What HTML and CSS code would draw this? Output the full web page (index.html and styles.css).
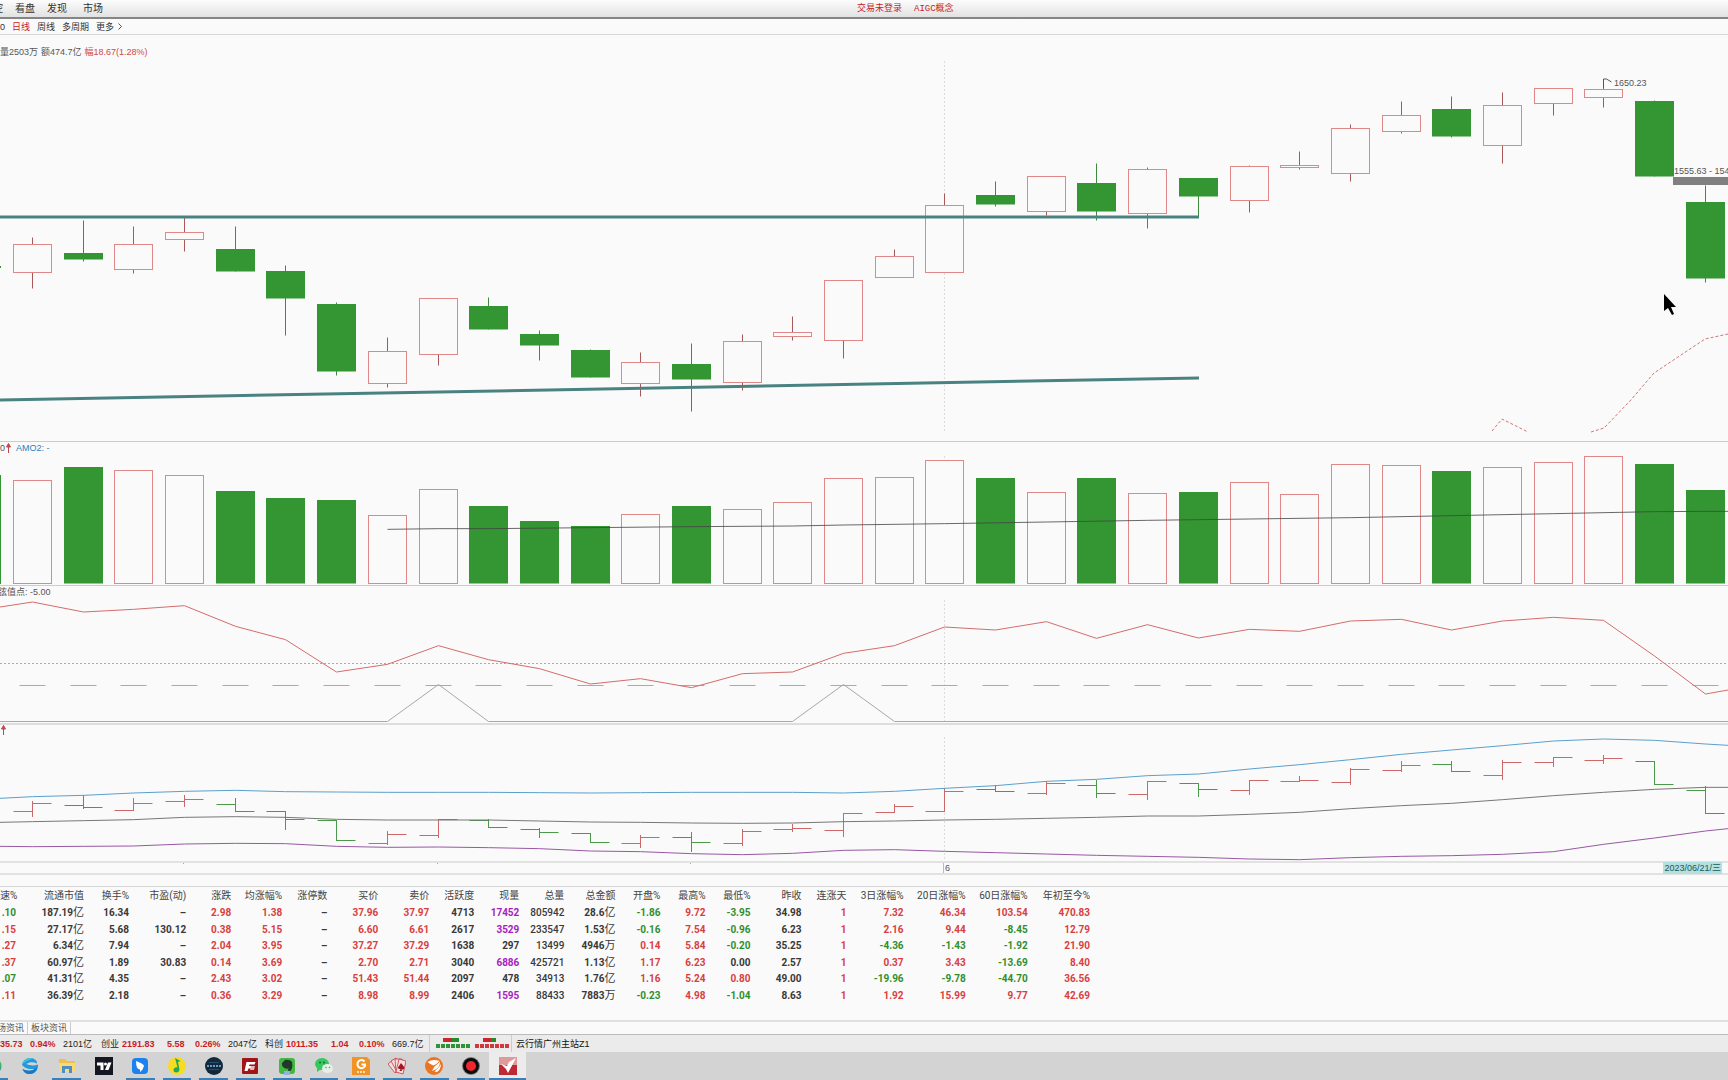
FILE: index.html
```html
<!DOCTYPE html>
<html lang="zh-CN">
<head>
<meta charset="utf-8">
<title>板块行情</title>
<link rel="stylesheet" href="styles.css">
</head>
<body>
<header class="menubar">
  <nav class="menu">
    <a href="#">控</a><a href="#">看盘</a><a href="#">发现</a><a href="#" class="market">市场</a>
  </nav>
  <div class="session"><a href="#">交易未登录</a><a href="#">AIGC概念</a></div>
</header>
<nav class="periods">
  <button type="button">0</button><button type="button" class="current">日线</button><button type="button">周线</button><button type="button">多周期</button><button type="button">更多<svg class="chevron" width="4" height="7" viewBox="0 0 4 7"><path d="M.5.5 3.5 3.5.5 6.5" fill="none" stroke="#555"/></svg></button>
</nav>
<main class="charts">
  <section class="panel price">
    <p class="caption summary"><span>量2503万</span><span>额474.7亿</span><span class="red">幅18.67(1.28%)</span></p>
    <svg class="plot" id="price"></svg>
  </section>
  <section class="panel volume">
    <p class="caption amo"><span>0</span><svg class="arrow" width="5" height="10" viewBox="0 0 5 10"><path d="M2.5 1V10M.5 4 2.5.5 4.500 4Z" stroke="#c04848" fill="#c04848"/></svg><span class="blue">AMO2: -</span></p>
    <svg class="plot" id="volume"></svg>
  </section>
  <section class="panel osc">
    <p class="caption sine"><span>弦值点: -5.00</span></p>
    <svg class="plot" id="osc"></svg>
  </section>
  <section class="panel boll">
    <p class="caption up"><svg class="arrow" width="5" height="10" viewBox="0 0 5 10"><path d="M2.5 1V10M.5 4 2.5.5 4.500 4Z" stroke="#c04848" fill="#c04848"/></svg></p>
    <svg class="plot" id="boll"></svg>
  </section>
  <div class="axis"><svg class="plot" id="axis"></svg><time class="date">2023/06/21/三</time></div>
</main>
<section class="quotes">
  <table>
    <colgroup><col class="c16"><col class="c68"><col class="c45"><col class="c57"><col class="c45"><col class="c51"><col class="c45"><col class="c51"><col class="c51"><col class="c45"><col class="c45"><col class="c45"><col class="c51"><col class="c45"><col class="c45"><col class="c45"><col class="c51"><col class="c45"><col class="c57"><col class="c62"><col class="c62"><col class="c62"></colgroup>
    <thead><tr><th>速%</th><th>流通市值</th><th>换手%</th><th>市盈(动)</th><th>涨跌</th><th>均涨幅%</th><th>涨停数</th><th>买价</th><th>卖价</th><th>活跃度</th><th>现量</th><th>总量</th><th>总金额</th><th>开盘%</th><th>最高%</th><th>最低%</th><th>昨收</th><th>连涨天</th><th>3日涨幅%</th><th>20日涨幅%</th><th>60日涨幅%</th><th>年初至今%</th></tr></thead>
    <tbody>
      <tr><td class="g">.10</td><td>187.19<i>亿</i></td><td>16.34</td><td>–</td><td class="r">2.98</td><td class="r">1.38</td><td>–</td><td class="r">37.96</td><td class="r">37.97</td><td>4713</td><td class="p">17452</td><td class="n">805942</td><td>28.6<i>亿</i></td><td class="g">-1.86</td><td class="r">9.72</td><td class="g">-3.95</td><td>34.98</td><td class="r">1</td><td class="r">7.32</td><td class="r">46.34</td><td class="r">103.54</td><td class="r">470.83</td></tr>
      <tr><td class="r">.15</td><td>27.17<i>亿</i></td><td>5.68</td><td>130.12</td><td class="r">0.38</td><td class="r">5.15</td><td>–</td><td class="r">6.60</td><td class="r">6.61</td><td>2617</td><td class="p">3529</td><td class="n">233547</td><td>1.53<i>亿</i></td><td class="g">-0.16</td><td class="r">7.54</td><td class="g">-0.96</td><td>6.23</td><td class="r">1</td><td class="r">2.16</td><td class="r">9.44</td><td class="g">-8.45</td><td class="r">12.79</td></tr>
      <tr><td class="r">.27</td><td>6.34<i>亿</i></td><td>7.94</td><td>–</td><td class="r">2.04</td><td class="r">3.95</td><td>–</td><td class="r">37.27</td><td class="r">37.29</td><td>1638</td><td>297</td><td class="n">13499</td><td>4946<i>万</i></td><td class="r">0.14</td><td class="r">5.84</td><td class="g">-0.20</td><td>35.25</td><td class="r">1</td><td class="g">-4.36</td><td class="g">-1.43</td><td class="g">-1.92</td><td class="r">21.90</td></tr>
      <tr><td class="r">.37</td><td>60.97<i>亿</i></td><td>1.89</td><td>30.83</td><td class="r">0.14</td><td class="r">3.69</td><td>–</td><td class="r">2.70</td><td class="r">2.71</td><td>3040</td><td class="p">6886</td><td class="n">425721</td><td>1.13<i>亿</i></td><td class="r">1.17</td><td class="r">6.23</td><td>0.00</td><td>2.57</td><td class="r">1</td><td class="r">0.37</td><td class="r">3.43</td><td class="g">-13.69</td><td class="r">8.40</td></tr>
      <tr><td class="g">.07</td><td>41.31<i>亿</i></td><td>4.35</td><td>–</td><td class="r">2.43</td><td class="r">3.02</td><td>–</td><td class="r">51.43</td><td class="r">51.44</td><td>2097</td><td>478</td><td class="n">34913</td><td>1.76<i>亿</i></td><td class="r">1.16</td><td class="r">5.24</td><td class="r">0.80</td><td>49.00</td><td class="r">1</td><td class="g">-19.96</td><td class="g">-9.78</td><td class="g">-44.70</td><td class="r">36.56</td></tr>
      <tr><td class="r">.11</td><td>36.39<i>亿</i></td><td>2.18</td><td>–</td><td class="r">0.36</td><td class="r">3.29</td><td>–</td><td class="r">8.98</td><td class="r">8.99</td><td>2406</td><td class="p">1595</td><td class="n">88433</td><td>7883<i>万</i></td><td class="g">-0.23</td><td class="r">4.98</td><td class="g">-1.04</td><td>8.63</td><td class="r">1</td><td class="r">1.92</td><td class="r">15.99</td><td class="r">9.77</td><td class="r">42.69</td></tr>
    </tbody>
  </table>
</section>
<nav class="tabs"><a href="#">场资讯</a><a href="#">板块资讯</a></nav>
<div class="status">
  <div class="index first"><b>35.73</b><b>0.94%</b><span>2101亿</span></div>
  <div class="index"><span>创业</span><b>2191.83</b><b>5.58</b><b>0.26%</b><span>2047亿</span></div>
  <div class="index"><span>科创</span><b>1011.35</b><b>1.04</b><b>0.10%</b><span>669.7亿</span></div>
  <div class="heat">
    <svg width="35" height="11" viewBox="0 0 35 11"><path d="M7 0h9v4H7z" fill="#c8282c"/><path d="M16 0h7v4h-7z" fill="#258a2c"/><path d="M0 8h34" stroke="#2f9438" stroke-width="4" stroke-dasharray="4 1"/></svg>
    <svg width="35" height="11" viewBox="0 0 35 11"><path d="M8 0h8v4H8z" fill="#c8282c"/><path d="M16 0h5v4h-5z" fill="#258a2c"/><path d="M0 8h34" stroke="#d03a3e" stroke-width="4" stroke-dasharray="4 1"/></svg>
  </div>
  <span class="server">云行情广州主站Z1</span>
</div>
<footer class="taskbar">
  <div class="apps">
  <button type="button" class="app open" aria-label="浏览器"><svg viewBox="0 0 18 18"><circle cx="9" cy="9" r="8.500" fill="#3cb85c"/><path d="M9 17a8 8 0 0 0 8-7H9z" fill="#2b8fd0"/></svg></button>
  <button type="button" class="app" aria-label="Edge"><svg viewBox="0 0 18 18"><path d="M1 8C2 2 8 0 12 1.500 15 2.500 16.500 5 16 6.500 12 4.500 8 5 5.500 7 8 8.500 13 9 17 7.500 17.500 13 13.500 17 9 17 5 17 2.500 15 1.500 12 6 14.500 11 14 13.500 12 9 12.500 4 11.500 1 8Z" fill="#2498d8"/><path d="M1 8C2 2 8 0 12 1.500 9 2.500 4 4 1 8Z" fill="#3fc0e4"/><path d="M1.500 12C6 14.500 11 14 13.500 12L16.500 10.500C15 15 12 17 9 17 5 17 2.500 15 1.500 12Z" fill="#1c78c4"/></svg></button>
  <button type="button" class="app open" aria-label="文件资源管理器"><svg viewBox="0 0 18 18"><path d="M1 2h6l2 2h8v11H1z" fill="#f0c04c"/><path d="M1 6h16v9H1z" fill="#f8d878"/><path d="M4 9h10v7h-3v-4H7v4H4z" fill="#4b8fc6"/></svg></button>
  <button type="button" class="app" aria-label="TradingView"><svg viewBox="0 0 18 18"><path d="M0 0h18v18H0z" fill="#131722"/><path d="M2 5.500h6.500V13H5.500V8.500H2z" fill="#fff"/><circle cx="10.500" cy="7" r="1.500" fill="#fff"/><path d="M13 5.500h3.500L13.500 13H10z" fill="#fff"/></svg></button>
  <button type="button" class="app open" aria-label="钉钉"><svg viewBox="0 0 18 18"><rect x="1" y="1" width="16" height="16" rx="4" fill="#1b82ee"/><path d="M5 4C9 5.500 12.500 7 13 9 13 10 11.500 11 12 12L9 15 9 12.500Q6.500 12 6 10.500 5 8 5 4Z" fill="#fff"/></svg></button>
  <button type="button" class="app open" aria-label="QQ音乐"><svg viewBox="0 0 18 18"><circle cx="9" cy="9" r="9" fill="#f8dc22"/><path d="M7 1 12.500 4 10 5 11.500 12.500C11.500 16 6 16.500 5.500 13.500 5 11 8 9.500 9.500 10.500Z" fill="#20a85a"/></svg></button>
  <button type="button" class="app open" aria-label="行情终端"><svg viewBox="0 0 18 18"><circle cx="9" cy="9" r="9" fill="#12283c"/><path d="M2 9h14" stroke="#78c8e8" stroke-width="1.500" stroke-dasharray="2 1"/><path d="M4 5.500h10M4 12.500h10" stroke="#28506e" stroke-width="1"/></svg></button>
  <button type="button" class="app open" aria-label="财经"><svg viewBox="0 0 18 18"><rect x="1" y="1" width="16" height="16" rx="1" fill="#a31418"/><path d="M5.500 5h9l-1 2.500H8.500L8 9h5l-1 2.500H7.500L6.500 14h-3z" fill="#fff"/><path d="M10 9h4l-1 4h-4z" fill="#e6b8b8"/></svg></button>
  <button type="button" class="app open" aria-label="印象笔记"><svg viewBox="0 0 18 18"><rect x="1" y="1" width="16" height="16" rx="3" fill="#42b840"/><path d="M4 6 7 3C10 2.500 13 3.500 14 5 15 9 14 13 12 14 9.500 14.500 9.500 12 11 11.500 8 12 5 11.500 4 8Z" fill="#22382a"/><path d="M6 14h6v4H6z" fill="#8fb4e0"/></svg></button>
  <button type="button" class="app open" aria-label="微信"><svg viewBox="0 0 18 18"><ellipse cx="7" cy="7" rx="7" ry="6" fill="#35c85c"/><path d="M2 11v4l4-3z" fill="#35c85c"/><circle cx="5" cy="5.500" r="1" fill="#1b6b32"/><circle cx="9" cy="5.500" r="1" fill="#1b6b32"/><ellipse cx="12.500" cy="11.500" rx="5.500" ry="4.500" fill="#e6f0e8"/><circle cx="11" cy="10.500" r=".8" fill="#789080"/><circle cx="14.500" cy="10.500" r=".8" fill="#789080"/></svg></button>
  <button type="button" class="app open" aria-label="广发证券"><svg viewBox="0 0 18 18"><path d="M0 0h15l3 3v15H0z" fill="#f19425"/><path d="M12.500 4.500A4 4 0 1 0 13 9V7.500H9.500" fill="none" stroke="#fff" stroke-width="2"/><path d="M5 15h8" stroke="#fbe0b8" stroke-width="2" stroke-dasharray="2 1"/></svg></button>
  <button type="button" class="app open" aria-label="纸牌"><svg viewBox="0 0 18 18"><g fill="#f7dede" stroke="#c83840" stroke-width=".8"><path d="M0 7 5 3 12 12 7 16Z"/><path d="M3 4 8 1 14 11 9 15Z"/><path d="M7 2h7v13H8Z"/><path d="M11 2l7 2-3 13-7-2z"/></g><path d="M13 6Q17 10 16 12 14.500 13 13.500 12L14 14H11.500L12.500 12Q10 12.500 10 10.500Z" fill="#a01828"/></svg></button>
  <button type="button" class="app open" aria-label="东方财富"><svg viewBox="0 0 18 18"><circle cx="9" cy="9" r="9" fill="#e97522"/><path d="M2.500 5Q8 1.500 14.500 4Q12 7 8.500 8.500 5 7 2.500 5ZM7 14 9.500 9.500Q13 7 15 4.500 15 9 11.500 12ZM9.500 14.500Q14 11 16 7 16 12 12 15Z" fill="#fff"/></svg></button>
  <button type="button" class="app open" aria-label="录屏"><svg viewBox="0 0 18 18"><circle cx="9" cy="9" r="9" fill="#777"/><circle cx="9" cy="9" r="8" fill="#0b0b0b"/><circle cx="9" cy="9" r="5" fill="#f0262c"/></svg></button>
  <button type="button" class="app open active" aria-label="通达信"><svg viewBox="0 0 18 18"><path d="M0 0h18v18H0z" fill="#e09a9c"/><path d="M0 8h18v10H0z" fill="#bc2a34"/><path d="M2 7 8 9 10 5 17 1 9 16 7 12Z" fill="#fff"/></svg></button>
  </div>
</footer>
<script src="charts.js"></script>
</body>
</html>
```
FILE: styles.css
```css
* { box-sizing: border-box; }
body {
  margin: 0;
  min-height: 100vh;
  display: flex;
  flex-direction: column;
  overflow-x: hidden;
  background: #fafafa;
  color: #333;
  font-family: "Liberation Sans", "Noto Sans CJK SC", sans-serif;
  font-size: 9px;
  line-height: 12px;
}
a { color: inherit; text-decoration: none; white-space: nowrap; }
button { border: 0; padding: 0; background: none; font: inherit; color: inherit; white-space: nowrap; }
p { margin: 0; }
.red { color: #cc4a4a; }
.blue { color: #2a80b8; }

.menubar {
  display: flex;
  align-items: center;
  height: 19px;
  font-size: 10px;
  background: linear-gradient(#fcfcfc, #e2e2e2);
  border-bottom: 2px solid #858585;
}
.menu { flex: 0 0 50%; display: flex; gap: 12px; margin-left: -7px; }
.market { margin-left: 4px; }
.session { display: flex; gap: 12px; color: #c81e1e; font-family: "Liberation Mono", "Noto Sans CJK SC", monospace; font-size: 9px; }

.periods {
  display: flex;
  align-items: center;
  gap: 7px;
  height: 16px;
  border-bottom: 1px solid #d8d8d8;
}
.periods .current { color: #cc1818; }
.chevron { margin-left: 4px; }

.panel { position: relative; border-bottom: 1px solid #ccc; }
.plot { display: block; width: 100%; height: 100%; }
.price { height: 407px; }
.volume { height: 144px; }
.osc { height: 139px; border-bottom: 2px solid #ddd; }
.boll { height: 138px; border-bottom: 2px solid #e2e2e2; }
.caption { position: absolute; top: 0; left: 0; display: flex; align-items: center; gap: 3px; color: #555; white-space: nowrap; }
.summary { top: 11px; }
.amo { gap: 1px; }
.amo .blue { margin-left: 4px; }
.sine { margin-left: -2px; }
.up { margin-left: 1px; }
.axis { position: relative; height: 12px; border-bottom: 2px solid #e2e2e2; }
.date { position: absolute; top: -1px; right: 6px; padding: 0 1px; background: #b4e0e0; color: #175a60; }
.plot text { fill: #555; font-size: 9px; }

.quotes { flex: 1; margin-top: 11px; border-top: 1px solid #d8d8d8; overflow: hidden; }
table {
  table-layout: fixed;
  width: 1090px;
  height: 117px;
  border-collapse: collapse;
  font-family: Roboto, "Noto Sans CJK SC", sans-serif;
  font-size: 10px;
}
.c16 { width: 16px; }
.c45 { width: 45px; }
.c51 { width: 51px; }
.c57 { width: 57px; }
.c62 { width: 62px; }
.c68 { width: 68px; }
th, td { padding: 0; text-align: right; white-space: nowrap; line-height: 16px; }
th { height: 18px; font-weight: 400; color: #444; }
td { font-weight: 700; color: #383838; }
td i { font-style: normal; font-weight: 400; font-size: 11px; }
.r { color: #d84040; }
.g { color: #2f8f2f; }
.p { color: #a81cc0; }
.n { font-weight: 500; }

.tabs { display: flex; height: 15px; border-top: 2px solid #e0e0e0; border-bottom: 1px solid #bbb; color: #555; }
.tabs a { padding: 0 3px; border-right: 1px solid #ccc; }
.tabs a:first-child { padding-left: 0; margin-left: -3px; }

.status { display: flex; align-items: center; height: 17px; background: #ebebeb; color: #222; white-space: nowrap; }
.index { display: grid; grid-template-columns: 21px 45px 28px 33px 37px; align-items: center; }
.index b { color: #cc1a1e; }
.first { grid-template-columns: 30px 33px 38px; }
.heat { display: flex; gap: 4px; padding: 3px 1px 3px 6px; border-left: 1px solid #ccc; border-right: 1px solid #ccc; }
.heat svg { display: block; }
.server { margin-left: 4px; color: #111; }

.taskbar { background: #d3d3d3; overflow: hidden; }
.apps { display: grid; grid-template-columns: repeat(15, 1fr); width: 551px; height: 28px; margin-left: -25px; }
.app { display: flex; justify-content: center; padding-top: 5px; position: relative; }
.app svg { width: 18px; height: 18px; }
.app.open::after { content: ""; position: absolute; bottom: 0; left: 4px; right: 4px; height: 2px; background: #3a7fb8; }
.app.active { background: #ececec; }
.app.active::after { left: 0; right: 0; }
```
FILE: charts.js
```js
// Vertical values are in thirds of a pixel, measured from each chart's origin.
const STEP = 50.69, FIRST = 32.5, HALF = 19, DESIGN = 1728;
const RED = '#e08888', RED_WICK = '#a85858', GREEN = '#339633', GREEN_WICK = '#3f8a3f';

// kind, high, body top, body bottom, low
const candles = [
  ['R',712,734,818,866],['G',660,760,778,785],['R',678,734,807,819],['R',652,697,717,755],
  ['G',680,748,815,815],['G',797,814,895,1005],['G',907,913,1113,1127],['R',1013,1054,1151,1161],
  ['R',896,896,1064,1096],['G',892,919,988,988],['G',991,1002,1037,1080],['G',1047,1050,1133,1133],
  ['R',1058,1087,1150,1190],['G',1029,1093,1138,1235],['R',1004,1024,1147,1170],['R',950,997,1010,1021],
  ['R',841,841,1021,1074],['R',748,770,833,833],['R',580,615,816,816],['G',544,586,614,619],
  ['R',529,529,634,647],['G',491,550,634,662],['R',502,509,641,686],['G',536,536,590,650],
  ['R',496,499,600,638],['R',453,496,503,507],['R',372,385,519,543],['R',304,347,395,401],
  ['G',289,329,409,413],['R',277,316,437,490],['R',266,266,310,346],['R',237,268,292,323],
  ['G',301,304,528,528],['G',555,606,834,846]
];
const volumes = [182,143,152,166,215,236,242,285,209,260,303,319,283,258,267,247,175,172,122,175,217,175,220,217,188,222,133,136,154,141,128,110,133,211];
const volumeMa = [[7,328],[8,326],[9,326],[11,323],[13,320],[15,318],[16,315],[18,311],[20,306],[22,301],[24,297],[26,293],[28,287],[30,281],[32,275],[33,274],[34,274]];
const osc = [546,576,568,557,619,659,756,733,677,719,746,792,776,803,761,756,700,677,621,630,605,655,614,654,628,634,603,598,630,603,592,601,708,822];
const upper = [1130,1126,1119,1114,1111,1115,1116,1117,1117,1117,1118,1119,1118,1117,1117,1117,1119,1114,1105,1097,1084,1078,1067,1062,1047,1034,1019,1003,990,977,963,957,961,972];
const middle = [1205,1202,1199,1192,1190,1192,1198,1200,1200,1200,1203,1206,1207,1209,1210,1209,1205,1203,1200,1198,1195,1192,1188,1188,1183,1177,1166,1157,1150,1139,1127,1117,1108,1102];
const lower = [1280,1279,1278,1272,1270,1271,1279,1282,1281,1283,1286,1293,1295,1301,1304,1300,1291,1289,1294,1298,1302,1306,1309,1312,1317,1319,1313,1309,1307,1303,1295,1273,1254,1233];
// open, high, low, close
const bars = [
  [1174,1145,1188,1150],[1157,1127,1166,1162],[1171,1134,1171,1150],[1143,1125,1158,1138],[1153,1136,1173,1173],
  [1173,1173,1228,1197],[1202,1202,1261,1261],[1270,1234,1273,1243],[1245,1197,1253,1197],[1202,1199,1222,1222],
  [1227,1226,1251,1238],[1240,1240,1267,1267],[1270,1245,1283,1252],[1253,1237,1294,1267],[1270,1229,1277,1234],
  [1228,1212,1234,1226],[1231,1180,1249,1180],[1178,1154,1178,1159],[1173,1105,1173,1113],[1107,1095,1114,1114],
  [1121,1085,1124,1089],[1096,1082,1131,1121],[1123,1084,1137,1084],[1091,1091,1128,1108],[1110,1081,1123,1081],
  [1083,1069,1084,1081],[1087,1045,1094,1048],[1051,1025,1054,1037],[1032,1023,1055,1055],[1065,1020,1078,1028],
  [1027,1012,1038,1012],[1021,1006,1031,1015],[1024,1024,1092,1092],[1111,1098,1180,1180]
];

let k = 1;
const cx = i => Math.floor((FIRST + STEP * i) * k) + 0.5;
const py = v => Math.floor(v / 3) + 0.5;
const ly = v => 420 + Math.floor(v / 3) + 0.5;
const line = (pts, stroke, extra = '') => `<polyline points="${pts.map(p => p.join()).join(' ')}" fill="none" stroke="${stroke}" ${extra}/>`;
const box = (i, top, bottom, kind) => {
  const w = Math.round(HALF * k), x = cx(i) - w;
  return kind === 'R'
    ? `<rect x="${x}" y="${top}" width="${2 * w}" height="${Math.max(1, bottom - top)}" fill="#fafafa" stroke="${RED}"/>`
    : `<rect x="${x - 0.5}" y="${top - 0.5}" width="${2 * w + 1}" height="${bottom - top + 0.5}" fill="${GREEN}"/>`;
};
const monthLine = (a, b) => line([[cx(18), a], [cx(18), b]], '#dcdcdc', 'stroke-dasharray="2 2"');
const X = v => v * k;

function show(id, top, height, content) {
  const svg = document.getElementById(id);
  svg.setAttribute('viewBox', `0 ${top} ${svg.clientWidth} ${height}`);
  svg.innerHTML = content;
}

function draw() {
  k = document.getElementById('price').clientWidth / DESIGN;
  const end = X(DESIGN);

  let s = monthLine(61, 432);
  candles.forEach(([kind, hi, top, bottom, lo], i) => {
    s += line([[cx(i), py(hi)], [cx(i), py(lo)]], kind === 'R' ? RED_WICK : GREEN_WICK) + box(i, py(top), py(bottom), kind);
  });
  s += `<rect x="0" y="266" width="1" height="2" fill="${GREEN}"/>`;
  s += line([[0, 217], [X(1199), 217]], '#4a8282', 'stroke-width="3"');
  s += line([[0, 400], [X(1199), 378]], '#4a8282', 'stroke-width="3"');
  s += `<rect x="${X(1673)}" y="177" width="${X(55)}" height="8" fill="#808080"/><text x="${X(1674)}" y="174">1555.63 - 1544.20</text>`;
  s += line([[cx(31), 88], [cx(31), 79], [cx(31) + 3, 79], [cx(31) + 8, 82]], '#555');
  s += `<text x="${X(1614)}" y="86">1650.23</text>`;
  const dash = 'stroke-dasharray="3 2"';
  s += line([[X(1492), 431], [X(1502), 419], [X(1528), 432]], '#cc7878', dash);
  s += line([[X(1591), 432], [X(1604), 428], [X(1630), 401], [X(1654), 373], [X(1675), 359], [X(1705), 339], [end, 334]], '#cc7878', dash);
  s += `<path transform="translate(${X(1664)} 294)" d="M0 0V17L4 14 8 21 10 20 7 13H12Z" fill="#000"/>`;
  show('price', 35, 406, s);

  s = monthLine(456, 584) + `<rect x="0" y="475" width="1" height="109" fill="${GREEN}"/>`;
  volumes.forEach((v, i) => { s += box(i, ly(v), 583.5, candles[i][0]); });
  s += line(volumeMa.map(([i, v]) => [cx(i), 420 + v / 3]), '#444', 'stroke-opacity=".8"');
  show('volume', 442, 143, s);

  s = monthLine(600, 721) + line([[0, 663.5], [end, 663.5]], '#aaa', 'stroke-dasharray="2 2"');
  candles.forEach((c, i) => { s += line([[cx(i) - 13, 685.5], [cx(i) + 13, 685.5]], '#aaa'); });
  s += line([[0, 721.5], [cx(7), 721.5], [cx(8), 684.5], [cx(9), 721.5], [cx(15), 721.5], [cx(16), 684.5], [cx(17), 721.5], [end, 721.5]], '#a8a8a8');
  s += line([[0, 607], ...osc.map((v, i) => [cx(i), 420 + v / 3]), [end, 690]], '#d46c6c');
  show('osc', 586, 137, s);

  s = monthLine(737, 861);
  const curve = (data, a, b, color) => line([[0, 420 + a / 3], ...data.map((v, i) => [cx(i), 420 + v / 3]), [end, 420 + b / 3]], color);
  bars.forEach(([o, hi, lo, c], i) => {
    const x = cx(i), w = 19 * k;
    s += `<path d="M${x - w} ${ly(o)}H${x}M${x} ${ly(hi) - 0.5}V${ly(lo) + 0.5}M${x} ${ly(c)}H${x + w}" fill="none" stroke="${candles[i][0] === 'R' ? '#cc6868' : '#4a9a4a'}"/>`;
  });
  s += curve(upper, 1135, 976, '#5aa0cc') + curve(middle, 1207, 1102, '#777') + curve(lower, 1279, 1226, '#9858a4');
  show('boll', 725, 136, s);

  s = [183, 437, 690].map(v => line([[X(v) + 0.5, 863], [X(v) + 0.5, 864]], '#aaa')).join('');
  s += line([[X(943) + 0.5, 863], [X(943) + 0.5, 873]], '#bbb') + `<text x="${X(945)}" y="871">6</text>`;
  show('axis', 863, 10, s);
}

draw();
addEventListener('resize', draw);
```
